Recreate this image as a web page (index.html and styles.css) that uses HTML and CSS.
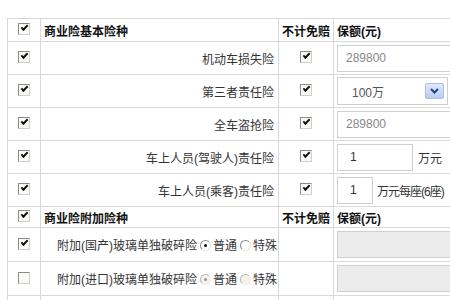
FILE: index.html
```html
<!DOCTYPE html>
<html lang="zh-CN">
<head>
    <meta charset="UTF-8">
    <title>商业险险种</title>
    <link rel="stylesheet" href="styles.css">
</head>
<body>
    <table class="ins">
        <colgroup>
            <col class="c-chk">
            <col class="c-name">
            <col class="c-free">
            <col class="c-amt">
        </colgroup>
        <tr class="head">
            <td class="chk"><span class="cb on"></span></td>
            <td class="title">商业险基本险种</td>
            <td class="title">不计免赔</td>
            <td class="title">保额(元)</td>
        </tr>
        <tr>
            <td class="chk"><span class="cb on"></span></td>
            <td class="name">机动车损失险</td>
            <td class="chk"><span class="cb on"></span></td>
            <td class="amt"><input class="field wide" value="289800" readonly></td>
        </tr>
        <tr>
            <td class="chk"><span class="cb on"></span></td>
            <td class="name">第三者责任险</td>
            <td class="chk"><span class="cb on"></span></td>
            <td class="amt">
                <div class="select">
                    <span class="select-text">100万</span>
                    <span class="select-btn">
                        <svg width="9" height="6" viewBox="0 0 9 6"><path d="M1 1l3.5 3.5L8 1" fill="none" stroke="#1f3f8f" stroke-width="2"/></svg>
                    </span>
                </div>
            </td>
        </tr>
        <tr>
            <td class="chk"><span class="cb on"></span></td>
            <td class="name">全车盗抢险</td>
            <td class="chk"><span class="cb on"></span></td>
            <td class="amt"><input class="field wide" value="289800" readonly></td>
        </tr>
        <tr>
            <td class="chk"><span class="cb on"></span></td>
            <td class="name">车上人员(驾驶人)责任险</td>
            <td class="chk"><span class="cb on"></span></td>
            <td class="amt"><input class="field mid dark" value="1" readonly><span class="unit">万元</span></td>
        </tr>
        <tr>
            <td class="chk"><span class="cb on"></span></td>
            <td class="name">车上人员(乘客)责任险</td>
            <td class="chk"><span class="cb on"></span></td>
            <td class="amt"><input class="field small dark" value="1" readonly><span class="unit tight">万元每座(6座)</span></td>
        </tr>
        <tr class="head2">
            <td class="chk"><span class="cb on"></span></td>
            <td class="title">商业险附加险种</td>
            <td class="title">不计免赔</td>
            <td class="title">保额(元)</td>
        </tr>
        <tr class="extra">
            <td class="chk"><span class="cb on"></span></td>
            <td class="opt">附加(国产)玻璃单独破碎险<span class="radio on"></span>普通<span class="radio"></span>特殊</td>
            <td></td>
            <td class="amt"><input class="field wide off" disabled></td>
        </tr>
        <tr class="extra">
            <td class="chk"><span class="cb"></span></td>
            <td class="opt">附加(进口)玻璃单独破碎险<span class="radio on dim"></span>普通<span class="radio dim"></span>特殊</td>
            <td></td>
            <td class="amt"><input class="field wide off" disabled></td>
        </tr>
        <tr class="extra">
            <td class="chk"></td>
            <td></td>
            <td></td>
            <td></td>
        </tr>
    </table>
</body>
</html>
```

FILE: styles.css
```css
html, body {
    overflow: hidden;
}
body {
    margin: 0;
    padding: 18px 0 0 7px;
    background: #fff;
    font-family: "Liberation Sans", "Noto Sans CJK SC", sans-serif;
    font-size: 12px;
    color: #333;
}
.ins {
    border-collapse: collapse;
    table-layout: fixed;
    width: 526px;
}
.c-chk { width: 33px; }
.c-name { width: 238px; }
.c-free { width: 55px; }
.c-amt { width: 200px; }
.ins td {
    border: 1px solid #d9d9d9;
    height: 32px;
    padding: 0 3px;
    vertical-align: middle;
    white-space: nowrap;
}
.ins .head td {
    height: 22px;
}
.ins .head2 td {
    height: 20px;
}
.ins .extra td {
    height: 33px;
}
.ins .chk {
    text-align: center;
}
.ins .title {
    font-weight: bold;
    color: #111;
}
.ins .name {
    text-align: right;
    padding-right: 4px;
}
.ins .opt {
    padding-left: 16px;
}
.cb {
    display: inline-block;
    position: relative;
    width: 10px;
    height: 10px;
    border: 1px solid #8c8c8c;
    border-right-color: #cfcfcf;
    border-bottom-color: #cfcfcf;
    background: #fbfbf5;
    vertical-align: middle;
    margin-top: -3px;
}
.cb.on::after {
    content: "";
    position: absolute;
    left: 2px;
    top: 1px;
    width: 5px;
    height: 2px;
    border-left: 2px solid #111;
    border-bottom: 2px solid #111;
    transform: rotate(-45deg);
}
.radio {
    display: inline-block;
    position: relative;
    width: 9px;
    height: 9px;
    margin: 0 2px 0 3px;
    border: 1px solid #8c8c8c;
    border-right-color: #e4e4e4;
    border-bottom-color: #e4e4e4;
    border-radius: 50%;
    background: #fff;
    vertical-align: middle;
    margin-top: -2px;
}
.radio.on::after {
    content: "";
    position: absolute;
    left: 3px;
    top: 3px;
    width: 3px;
    height: 3px;
    border-radius: 50%;
    background: #111;
}
.radio.dim {
    border-color: #b8b8b8 #eee #eee #b8b8b8;
    background: #f3f3ea;
}
.radio.dim.on::after {
    background: #999;
}
.field {
    box-sizing: border-box;
    height: 27px;
    padding: 0 8px;
    border: 1px solid #cfcfcf;
    background: #fff;
    font-family: inherit;
    font-size: 12px;
    color: #888;
    vertical-align: middle;
}
.field.wide { width: 180px; }
.field.mid { width: 76px; padding-left: 12px; }
.field.small { width: 36px; padding-left: 12px; }
.field.dark { color: #333; }
.field.off {
    background: #ececec;
    border-color: #d0d0d0;
}
.unit {
    margin-left: 5px;
    vertical-align: middle;
}
.unit.tight {
    margin-left: 4px;
    letter-spacing: -1px;
}
.select {
    display: flex;
    align-items: center;
    box-sizing: border-box;
    width: 111px;
    height: 28px;
    padding: 0 3px 0 14px;
    border: 1px solid #cfcfcf;
    background: #fff;
    color: #555;
}
.select-text {
    flex: 1;
}
.select-btn {
    display: flex;
    align-items: center;
    justify-content: center;
    width: 17px;
    height: 14px;
    border: 1px solid #a9bfe3;
    border-radius: 2px;
    background: linear-gradient(#dfe9fb, #b9cdf1);
}
```
